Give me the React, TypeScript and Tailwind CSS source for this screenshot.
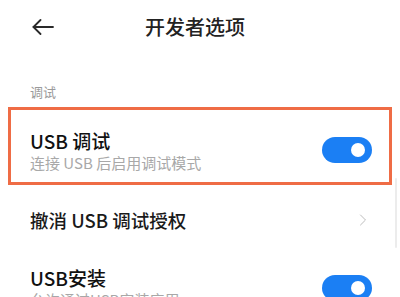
import { ChevronRight } from 'lucide-react'

function Toggle() {
  return (
    <div className="w-[50px] h-[26px] rounded-full bg-[#1b7ff4] flex items-center justify-end pr-[7px] flex-shrink-0">
      <span className="w-[14px] h-[14px] rounded-full bg-white" />
    </div>
  )
}

export default function App() {
  return (
    <div
      className="relative w-[400px] h-[297px] overflow-hidden bg-white"
      style={{ fontFamily: '"Noto Sans CJK SC", "Noto Sans", sans-serif' }}
    >
      {/* Header */}
      <div className="h-[54px] flex items-center pl-[32px]">
        <svg width="22" height="16" viewBox="0 0 22 16" fill="none" stroke="#2a2a2a" strokeWidth="1.8" strokeLinecap="round" strokeLinejoin="round">
          <path d="M1.5 8H21" />
          <path d="M8.5 1L1.5 8L8.5 15" />
        </svg>
        <h1 className="ml-[91px] text-[20px] leading-none font-medium text-[#222]">开发者选项</h1>
      </div>

      {/* Section label */}
      <div className="h-[53px] pl-[30px] pt-[31px] text-[13px] leading-none text-[#9a9a9a]">调试</div>

      {/* USB debugging (highlighted) */}
      <div className="mx-[8px] h-[78px] border-[3px] border-[#ef6c45] flex items-start pl-[19px] pr-[17px]">
        <div className="flex-1 min-w-0 pt-[19px]">
          <p className="text-[19px] leading-[24px] font-medium text-[#111]">USB 调试</p>
          <p className="text-[15px] leading-[20px] text-[#a8a8a8]">连接 USB 后启用调试模式</p>
        </div>
        <div className="mt-[27px]">
          <Toggle />
        </div>
      </div>

      {/* Revoke authorizations */}
      <div className="h-[70px] flex items-center pl-[30px] pr-[27px]">
        <p className="flex-1 text-[18.5px] leading-none font-medium text-[#1a1a1a]">撤消 USB 调试授权</p>
        <ChevronRight className="w-[20px] h-[20px] text-[#bdbdbd]" strokeWidth={1.2} />
      </div>

      {/* USB install */}
      <div className="flex items-start pl-[30px] pr-[28px] pt-[11px]">
        <div className="flex-1 min-w-0">
          <p className="text-[19px] leading-[24px] font-medium text-[#111]">USB安装</p>
          <p className="text-[15px] leading-[20px] text-[#a8a8a8]">允许通过USB安装应用</p>
        </div>
        <div className="pt-[9px]">
          <Toggle />
        </div>
      </div>

      {/* scrollbar */}
      <div className="absolute right-[3px] top-[178px] w-[2px] h-[70px] rounded-full bg-[#ececec]" />
    </div>
  )
}
